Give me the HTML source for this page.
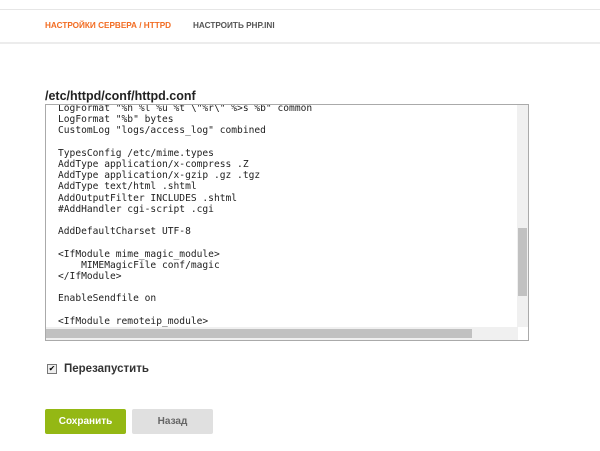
<!DOCTYPE html>
<html><head><meta charset="utf-8"><style>
body{margin:0;width:600px;height:451px;background:#fff;font-family:"Liberation Sans",sans-serif;position:relative;overflow:hidden}
.topline{position:absolute;left:0;right:0;top:9px;height:1px;background:#e6e6e6}
.nav{position:absolute;left:0;right:0;top:42px;height:2px;background:#ececec}
.tab{position:absolute;top:21px;font-size:8.2px;font-weight:bold}
h1{position:absolute;left:45px;top:89px;margin:0;font-size:12.5px;font-weight:bold;color:#222}
.ta{position:absolute;left:45px;top:104px;width:484px;height:237px;border:1px solid #aaa;overflow:hidden;box-sizing:border-box}
pre{position:absolute;left:12px;top:-2px;margin:0;font-family:"DejaVu Sans Mono",monospace;font-size:9.6px;line-height:11.2px;color:#222}
.vs{position:absolute;right:0;top:0;width:11px;height:222px;background:#f0f0f0}
.th{position:absolute;left:1px;top:123px;width:9px;height:68px;background:#c1c1c1}
.hs{position:absolute;left:0;bottom:0;width:472px;height:13px;background:#f0f0f0}
.hth{position:absolute;left:0;top:2px;width:426px;height:9px;background:#c1c1c1}
.btn{position:absolute;top:409px;height:25px;width:81px;border-radius:2px;font-size:10px;font-weight:bold;text-align:center;line-height:25px}
</style></head><body>
<div class="topline"></div>
<div class="tab" style="left:45px;color:#f26c22">НАСТРОЙКИ СЕРВЕРА / HTTPD</div>
<div class="tab" style="left:193px;color:#555">НАСТРОИТЬ PHP.INI</div>
<div class="nav"></div>
<h1>/etc/httpd/conf/httpd.conf</h1>
<div class="ta"><pre>LogFormat "%h %l %u %t \"%r\" %>s %b" common
LogFormat "%b" bytes
CustomLog "logs/access_log" combined

TypesConfig /etc/mime.types
AddType application/x-compress .Z
AddType application/x-gzip .gz .tgz
AddType text/html .shtml
AddOutputFilter INCLUDES .shtml
#AddHandler cgi-script .cgi

AddDefaultCharset UTF-8

&lt;IfModule mime_magic_module&gt;
    MIMEMagicFile conf/magic
&lt;/IfModule&gt;

EnableSendfile on

&lt;IfModule remoteip_module&gt;
    RemoteIPHeader X-Real-IP</pre>
<div class="vs"><div class="th"></div></div>
<div class="hs"><div class="hth"></div></div>
</div>
<div style="position:absolute;left:47px;top:364px;width:8px;height:8px;border:1px solid #777;font-size:8px;line-height:8px;text-align:center;background:#eee">✔</div>
<div style="position:absolute;left:64px;top:363px;font-size:11.5px;font-weight:bold;color:#333">Перезапустить</div>
<div class="btn" style="left:45px;background:#94b814;color:#fff">Сохранить</div>
<div class="btn" style="left:132px;background:#e0e0e0;color:#666">Назад</div>
</body></html>
